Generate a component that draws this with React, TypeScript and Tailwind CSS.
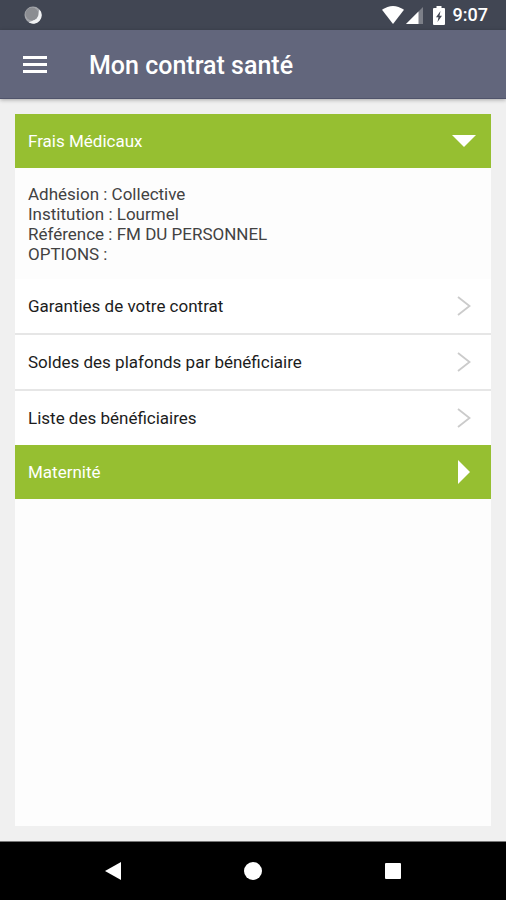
import { useState } from "react";

const details = [
  "Adhésion : Collective",
  "Institution : Lourmel",
  "Référence : FM DU PERSONNEL",
  "OPTIONS :",
];

const links = [
  "Garanties de votre contrat",
  "Soldes des plafonds par bénéficiaire",
  "Liste des bénéficiaires",
];

function StatusBar() {
  return (
    <div className="flex h-[30px] shrink-0 items-center justify-between bg-[#414653] pr-[18px] pl-6 text-white">
      <svg width="18" height="18" viewBox="0 0 18 18" aria-hidden="true">
        <circle cx="9" cy="9" r="8.5" fill="#a3a5aa" />
        <path d="M15.500 3.500A8.500 8.500 0 0 1 4.500 16.300 A8.500 8.500 0 0 0 15.500 3.500Z" fill="#f1f2f4" />
        <path d="M15.500 3.500A8.500 8.500 0 0 1 4.500 16.300 Q13 14.500 15.500 3.500Z" fill="#f1f2f4" />
        <circle cx="8" cy="8" r="6.500" fill="#8b8d92" />
      </svg>
      <div className="flex items-center">
        <svg width="22" height="18" viewBox="0 0 22 18" fill="currentColor" aria-hidden="true">
          <path d="M0 3.8Q11-3.8 22 3.8L11 18Z" />
        </svg>
        <svg className="ml-0.5" width="17" height="17" viewBox="0 0 17 17" aria-hidden="true">
          <path d="M17 0V17H0Z" fill="#7c7f88" />
          <path d="M12.500 4.500V17H0Z" fill="#fff" />
        </svg>
        <svg className="ml-2.5" width="12" height="19" viewBox="0 0 12 19" aria-hidden="true">
          <path d="M3.500 0h5v2H11q1 0 1 1v15q0 1-1 1H1q-1 0-1-1V3q0-1 1-1h2.500Z" fill="#fff" />
          <path d="M7.500 5 3 11.200H5.500L4.500 16 9 9.800H6.500Z" fill="#414653" />
        </svg>
        <span className="ml-2 text-lg leading-6 font-medium">9:07</span>
      </div>
    </div>
  );
}

function Chevron() {
  return (
    <svg width="14" height="20" viewBox="0 0 14 20" fill="none" stroke="#cbcbcb" strokeWidth="1.800" aria-hidden="true">
      <path d="M1 1 12.500 10 1 19" />
    </svg>
  );
}

function SectionHeader({ title, open, onToggle }: { title: string; open: boolean; onToggle: () => void }) {
  return (
    <h2>
      <button
        type="button"
        aria-expanded={open}
        onClick={onToggle}
        className="flex h-[54px] w-full items-center justify-between bg-[#96bf31] px-[13px] text-left text-[17px] leading-5 text-white"
      >
        {title}
        <span className="flex w-7 justify-center">
          {open ? (
            <svg width="24" height="12" viewBox="0 0 24 12" fill="currentColor" aria-hidden="true">
              <path d="M0 0H24L12 12Z" />
            </svg>
          ) : (
            <svg width="12" height="24" viewBox="0 0 12 24" fill="currentColor" aria-hidden="true">
              <path d="M0 0V24L12 12Z" />
            </svg>
          )}
        </span>
      </button>
    </h2>
  );
}

export default function App() {
  const [medicalOpen, setMedicalOpen] = useState(true);
  const [maternityOpen, setMaternityOpen] = useState(false);

  return (
    <div className="flex min-h-screen flex-col bg-[#f0f0f0] font-['Roboto',sans-serif]">
      <StatusBar />
      <header className="flex h-[69px] shrink-0 items-center gap-[42px] border-b border-[#50546b] bg-[#62667c] px-[23px] text-white shadow-[0_1px_4px_rgba(0,0,0,0.3)]">
        <button type="button" aria-label="Menu" className="flex flex-col gap-1">
          <span className="h-[3px] w-6 bg-white" />
          <span className="h-[3px] w-6 bg-white" />
          <span className="h-[3px] w-6 bg-white" />
        </button>
        <h1 className="pt-1 text-[25px] leading-8 font-medium">Mon contrat santé</h1>
      </header>

      <main className="flex grow flex-col px-[15px] py-[15px]">
        <section className="grow bg-[#fdfdfd]">
          <SectionHeader title="Frais Médicaux" open={medicalOpen} onToggle={() => setMedicalOpen(!medicalOpen)} />
          {medicalOpen && (
            <>
              <div className="px-[13px] pt-4 pb-[15px] text-[17px] leading-5 text-[#424242]">
                {details.map((line) => (
                  <p key={line}>{line}</p>
                ))}
              </div>
              <ul className="divide-y-2 divide-[#e6e6e6] bg-white">
                {links.map((label) => (
                  <li key={label}>
                    <a
                      href="#"
                      className="flex h-[54px] items-center justify-between pr-5 pl-[13px] text-[17px] leading-5 text-[#1c1c1c]"
                    >
                      {label}
                      <Chevron />
                    </a>
                  </li>
                ))}
              </ul>
            </>
          )}
          <SectionHeader title="Maternité" open={maternityOpen} onToggle={() => setMaternityOpen(!maternityOpen)} />
        </section>
      </main>

      <nav className="flex h-[59px] shrink-0 items-center justify-center border-t border-[#777] bg-black text-white">
        <button type="button" aria-label="Retour" className="flex w-[140px] justify-center">
          <svg width="16" height="18" viewBox="0 0 16 18" fill="currentColor" aria-hidden="true">
            <path d="M16 0V18L0 9Z" />
          </svg>
        </button>
        <button type="button" aria-label="Accueil" className="flex w-[140px] justify-center">
          <span className="size-[18px] rounded-full bg-white" />
        </button>
        <button type="button" aria-label="Applications récentes" className="flex w-[140px] justify-center">
          <span className="size-4 rounded-[1px] bg-white" />
        </button>
      </nav>
    </div>
  );
}
